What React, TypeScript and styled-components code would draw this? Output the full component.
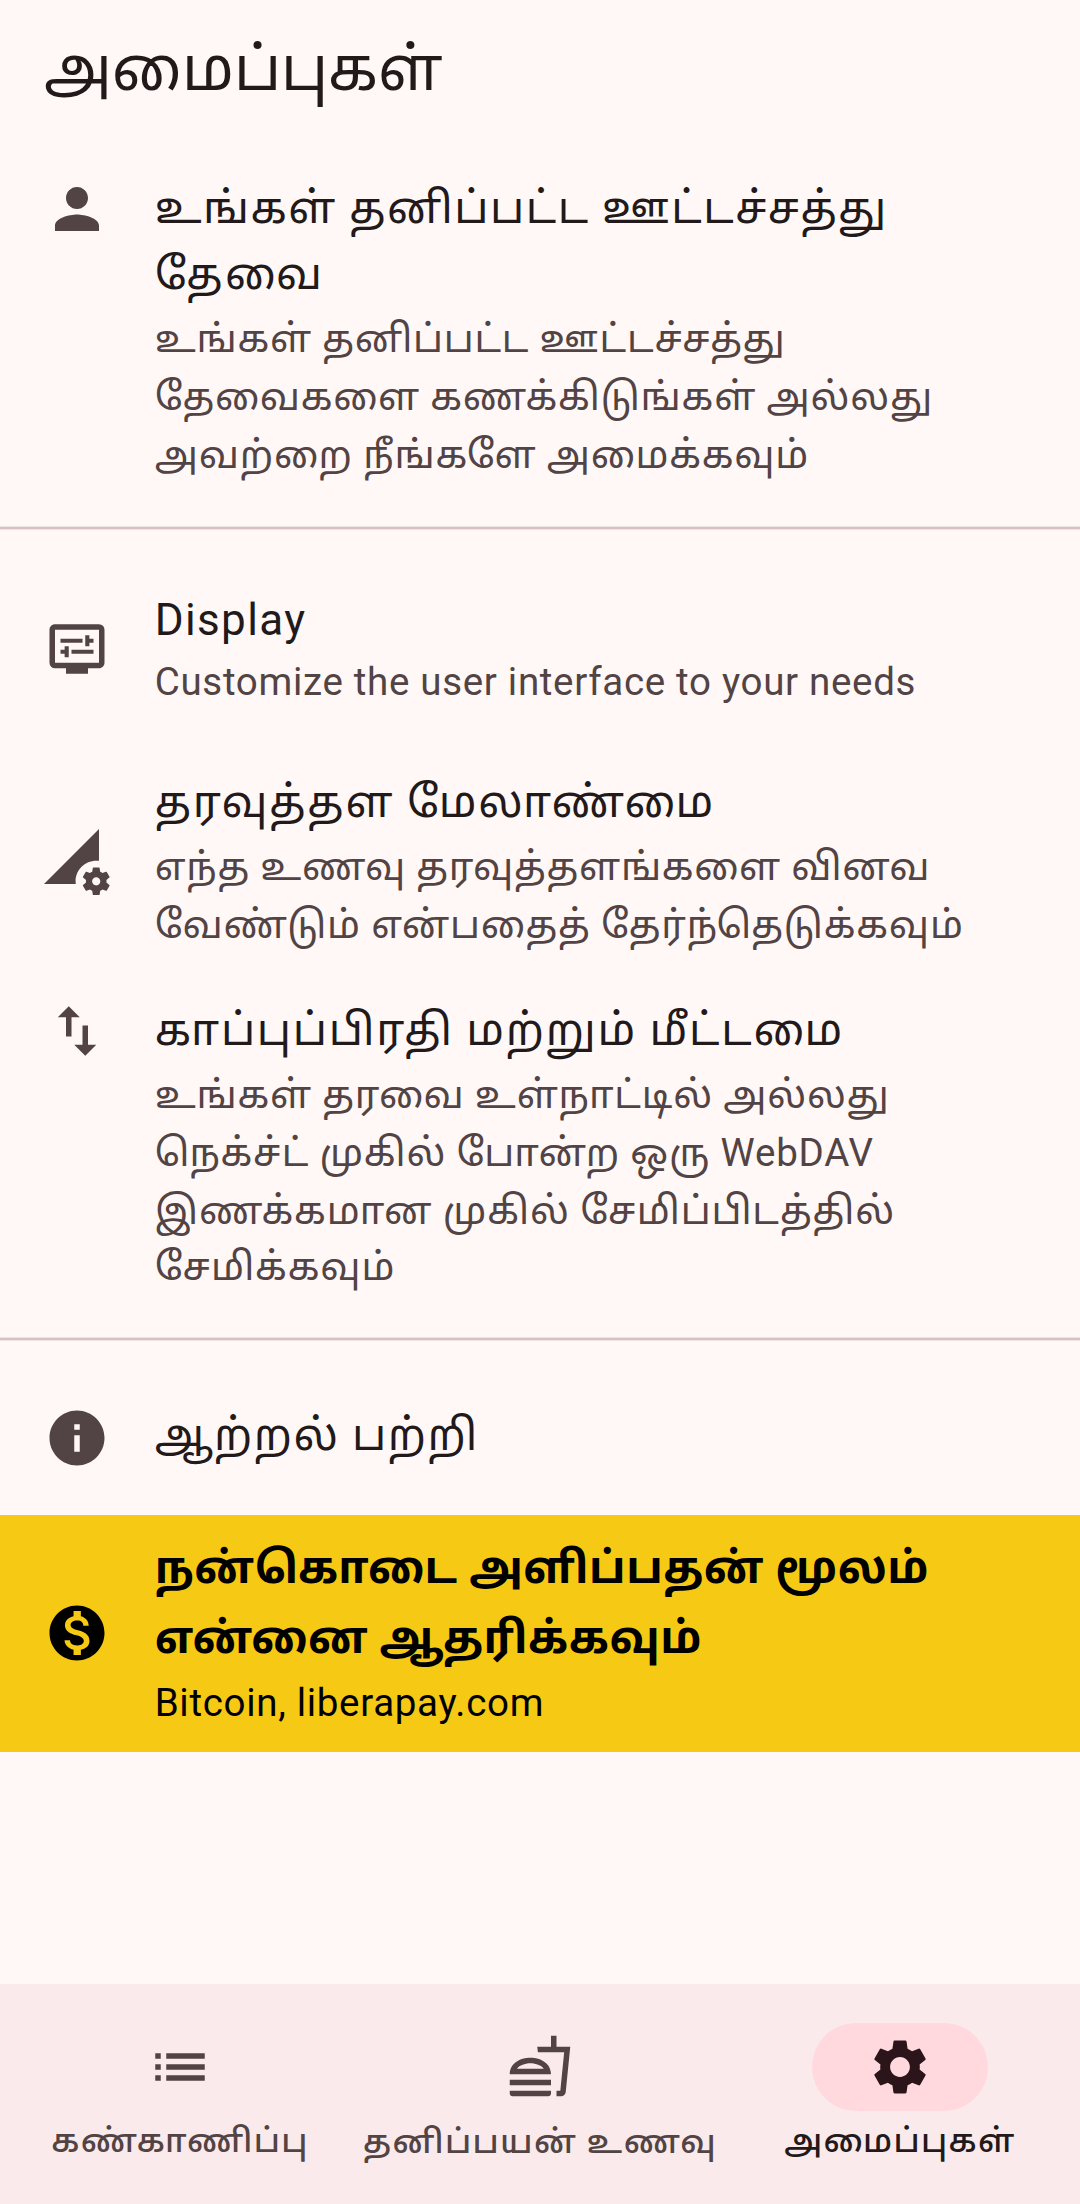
import React from 'react';
import styled, { createGlobalStyle } from 'styled-components';
import type { IconType } from 'react-icons';
import {
  MdPerson,
  MdOutlineDisplaySettings,
  MdPermDataSetting,
  MdImportExport,
  MdInfo,
  MdMonetizationOn,
  MdList,
  MdOutlineFastfood,
  MdSettings,
} from 'react-icons/md';

const GlobalStyle = createGlobalStyle`
  body {
    margin: 0;
    background: #fff8f7;
    font-family: Roboto, "Noto Sans Tamil", "Noto Sans", sans-serif;
  }
`;

const Screen = styled.div`
  display: flex;
  flex-direction: column;
  width: 1080px;
  height: 2204px;
  overflow: hidden;
  background: #fff8f7;
  color: #22191a;
`;

const Header = styled.h1`
  box-sizing: border-box;
  flex: none;
  height: 143px;
  margin: 0;
  padding: 28px 44px 0;
  font-size: 60.5px;
  font-weight: 400;
  line-height: 84px;
  white-space: nowrap;
`;

const Row = styled.section<{ $height: number; $top: number; $highlight?: boolean }>`
  box-sizing: border-box;
  flex: none;
  display: flex;
  gap: 44.7px;
  height: ${p => p.$height}px;
  padding: ${p => p.$top}px 44px 0;
  background: ${p => (p.$highlight ? '#f6c915' : 'transparent')};
  color: ${p => (p.$highlight ? '#000' : '#22191a')};
`;

const RowIcon = styled.div<{ $shift: number; $highlight?: boolean }>`
  flex: none;
  width: 66px;
  height: 66px;
  margin-top: ${p => p.$shift}px;
  color: ${p => (p.$highlight ? '#000' : '#524344')};
  svg {
    display: block;
    width: 66px;
    height: 66px;
    overflow: visible;
  }
`;

const Texts = styled.div<{ $gap: number }>`
  display: flex;
  flex-direction: column;
  gap: ${p => p.$gap}px;
  white-space: nowrap;
`;

const Title = styled.div<{ $bold?: boolean }>`
  font-size: 44px;
  font-weight: ${p => (p.$bold ? 700 : 400)};
  line-height: ${p => (p.$bold ? 69.7 : 66)}px;
`;

const Subtitle = styled.div<{ $highlight?: boolean }>`
  font-size: 38.5px;
  color: ${p => (p.$highlight ? '#000' : '#524344')};
`;

const Line = styled.span<{ $lh?: number; $ls: number }>`
  display: block;
  letter-spacing: ${p => p.$ls}px;
  line-height: ${p => (p.$lh ? `${p.$lh}px` : 'inherit')};
`;

const Divider = styled.hr`
  box-sizing: border-box;
  flex: none;
  width: 100%;
  height: 4px;
  margin: 0;
  border: solid #efe3e3;
  border-width: 1px 0;
  background: #d7c1c3;
`;

const NavBar = styled.nav`
  box-sizing: border-box;
  flex: none;
  display: grid;
  grid-template-columns: repeat(3, 360px);
  height: 220px;
  margin-top: auto;
  padding-top: 39px;
  background: #faeaeb;
`;

const NavItem = styled.div<{ $active?: boolean }>`
  display: flex;
  flex-direction: column;
  align-items: center;
  color: ${p => (p.$active ? '#22191a' : '#524344')};
`;

const Pill = styled.div<{ $active?: boolean; $lift?: number }>`
  box-sizing: border-box;
  display: flex;
  align-items: center;
  justify-content: center;
  width: 176px;
  height: 88px;
  padding-bottom: ${p => (p.$lift ?? 0) * 2}px;
  border-radius: 44px;
  background: ${p => (p.$active ? '#ffd9de' : 'transparent')};
  color: ${p => (p.$active ? '#2b151a' : '#524344')};
  svg {
    width: 66px;
    height: 66px;
  }
`;

const NavLabel = styled.span<{ $drop?: number }>`
  margin-top: ${p => 5 + (p.$drop ?? 0)}px;
  font-size: 33px;
  font-weight: 500;
  letter-spacing: 1.375px;
  line-height: 50px;
  white-space: nowrap;
`;

interface TextLine {
  text: string;
  ls: number;
  lh?: number;
}

interface Entry {
  icon: IconType;
  title: TextLine[];
  subtitle?: TextLine[];
  height: number;
  top: number;
  iconTop: number;
  gap: number;
  highlight?: boolean;
  dividerAfter?: boolean;
}

const entries: Entry[] = [
  {
    icon: MdPerson,
    title: [
      { text: 'உங்கள் தனிப்பட்ட ஊட்டச்சத்து', ls: 1.48 },
      { text: 'தேவை', ls: 2.3 },
    ],
    subtitle: [
      { text: 'உங்கள் தனிப்பட்ட ஊட்டச்சத்து', ls: 0.74, lh: 58 },
      { text: 'தேவைகளை கணக்கிடுங்கள் அல்லது', ls: 0.82, lh: 58 },
      { text: 'அவற்றை நீங்களே அமைக்கவும்', ls: 0.81, lh: 58 },
    ],
    height: 383,
    top: 32,
    iconTop: 33,
    gap: 2.5,
    dividerAfter: true,
  },
  {
    icon: MdOutlineDisplaySettings,
    title: [{ text: 'Display', ls: 1.375 }],
    subtitle: [{ text: 'Customize the user interface to your needs', ls: 0.6875, lh: 55 }],
    height: 211.25,
    top: 57,
    iconTop: 85.75,
    gap: 1,
  },
  {
    icon: MdPermDataSetting,
    title: [{ text: 'தரவுத்தள மேலாண்மை', ls: 1.82 }],
    subtitle: [
      { text: 'எந்த உணவு தரவுத்தளங்களை வினவ', ls: 0.75, lh: 58 },
      { text: 'வேண்டும் என்பதைத் தேர்ந்தெடுக்கவும்', ls: 0.82, lh: 58 },
    ],
    height: 228,
    top: 27.5,
    iconTop: 88,
    gap: 3,
  },
  {
    icon: MdImportExport,
    title: [{ text: 'காப்புப்பிரதி மற்றும் மீட்டமை', ls: 1.73 }],
    subtitle: [
      { text: 'உங்கள் தரவை உள்நாட்டில் அல்லது', ls: 0.75, lh: 58 },
      { text: 'நெக்ச்ட் முகில் போன்ற ஒரு WebDAV', ls: 0.77, lh: 58 },
      { text: 'இணக்கமான முகில் சேமிப்பிடத்தில்', ls: 0.86, lh: 58 },
      { text: 'சேமிக்கவும்', ls: 0.87, lh: 53 },
    ],
    height: 367.75,
    top: 27.5,
    iconTop: 28.5,
    gap: 3,
    dividerAfter: true,
  },
  {
    icon: MdInfo,
    title: [{ text: 'ஆற்றல் பற்றி', ls: 1.53 }],
    height: 174,
    top: 61,
    iconTop: 64,
    gap: 0,
  },
  {
    icon: MdMonetizationOn,
    title: [
      { text: 'நன்கொடை அளிப்பதன் மூலம்', ls: 0.5 },
      { text: 'என்னை ஆதரிக்கவும்', ls: 0.43 },
    ],
    subtitle: [{ text: 'Bitcoin, liberapay.com', ls: 0.6875, lh: 55 }],
    height: 237,
    top: 19.3,
    iconTop: 85,
    gap: 1.5,
    highlight: true,
  },
];

const tabs: { icon: IconType; label: string; active?: boolean; drop?: number; lift?: number }[] = [
  { icon: MdList, label: 'கண்காணிப்பு' },
  { icon: MdOutlineFastfood, label: 'தனிப்பயன் உணவு', drop: 1, lift: 1.5 },
  { icon: MdSettings, label: 'அமைப்புகள்', active: true },
];

export default function App() {
  return (
    <Screen>
      <GlobalStyle />
      <Header>அமைப்புகள்</Header>
      {entries.map(e => (
        <React.Fragment key={e.title[0].text}>
          <Row $height={e.height} $top={e.top} $highlight={e.highlight}>
            <RowIcon $shift={e.iconTop - e.top} $highlight={e.highlight}>
              <e.icon />
            </RowIcon>
            <Texts $gap={e.gap}>
              <Title $bold={e.highlight}>
                {e.title.map(t => (
                  <Line key={t.text} $ls={t.ls}>
                    {t.text}
                  </Line>
                ))}
              </Title>
              {e.subtitle && (
                <Subtitle $highlight={e.highlight}>
                  {e.subtitle.map(s => (
                    <Line key={s.text} $ls={s.ls} $lh={s.lh}>
                      {s.text}
                    </Line>
                  ))}
                </Subtitle>
              )}
            </Texts>
          </Row>
          {e.dividerAfter && <Divider />}
        </React.Fragment>
      ))}
      <NavBar>
        {tabs.map(t => (
          <NavItem key={t.label} $active={t.active}>
            <Pill $active={t.active} $lift={t.lift}>
              <t.icon />
            </Pill>
            <NavLabel $drop={t.drop}>{t.label}</NavLabel>
          </NavItem>
        ))}
      </NavBar>
    </Screen>
  );
}
